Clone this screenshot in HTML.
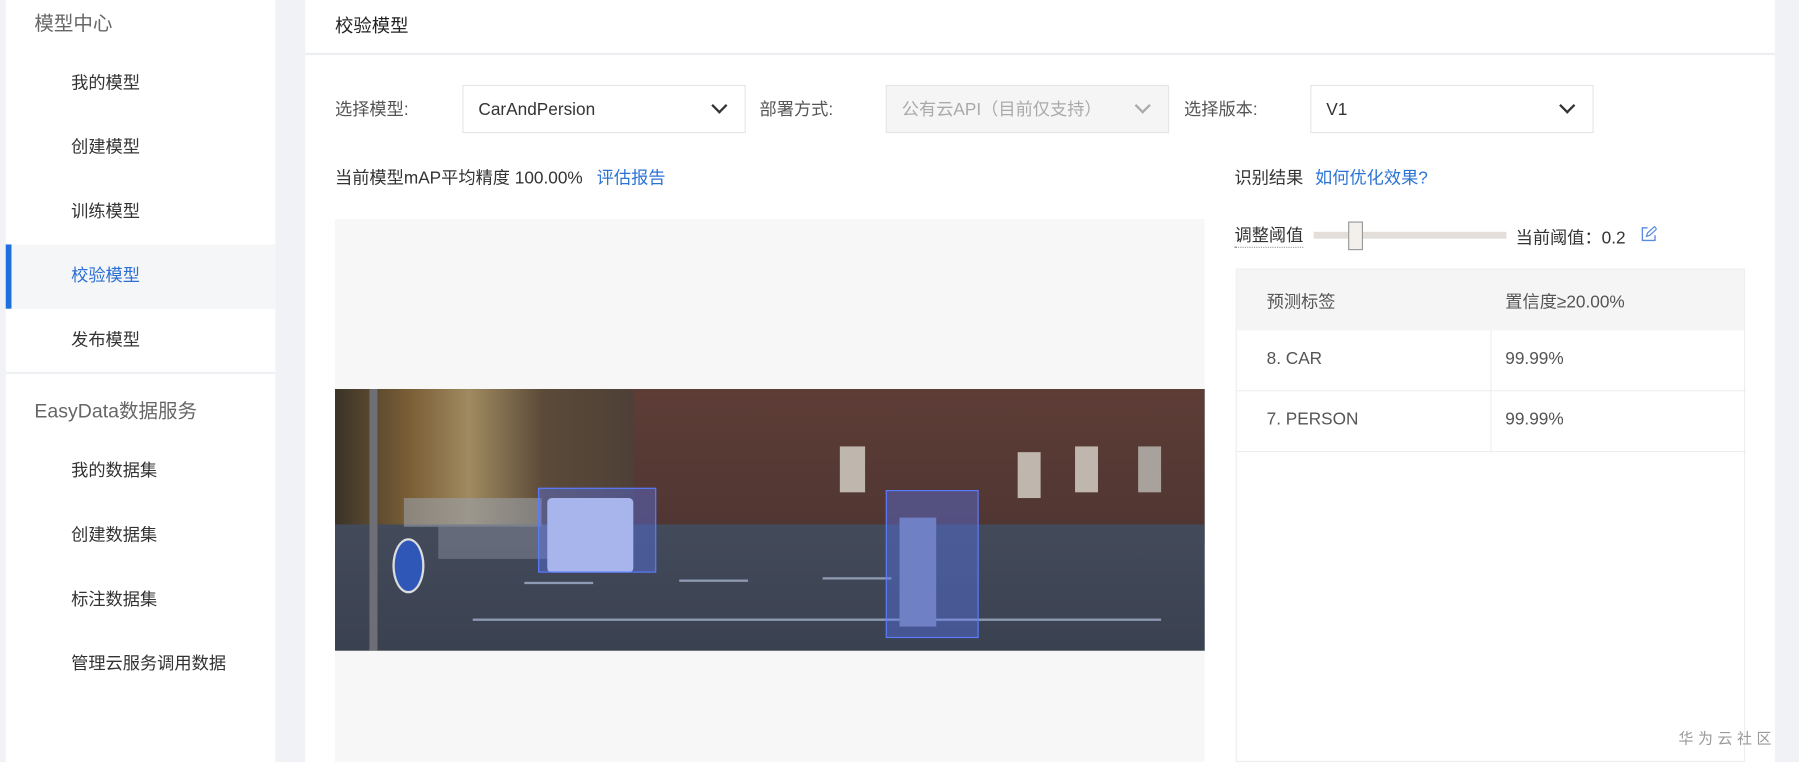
<!DOCTYPE html>
<html><head><meta charset="utf-8"><style>
html,body{margin:0;padding:0;width:1799px;height:762px;overflow:hidden;background:#f0f2f5;}
#w{position:absolute;left:0;top:0;width:1568px;height:664px;transform:scale(1.14732,1.14759);transform-origin:0 0;font-family:"Liberation Sans","Noto Sans CJK SC",sans-serif;color:#333;}
.a{position:absolute;white-space:nowrap;}
.side{position:absolute;left:5px;top:0;width:235px;height:664px;background:#fff;}
.it{position:absolute;left:57px;font-size:15px;color:#333;line-height:20px;}
.main{position:absolute;left:266px;top:0;width:1281px;height:664px;background:#fff;}
.sel{position:absolute;height:42px;border:1px solid #e6e6e6;box-sizing:border-box;background:#fff;font-size:15px;line-height:42px;padding-left:13px;}
.chev{position:absolute;right:17px;top:12px;width:8px;height:8px;border-right:2px solid #333;border-bottom:2px solid #333;transform:rotate(45deg);}
.lbl{font-size:15px;color:#555;}
.blue{color:#2b74d4;}
.box{position:absolute;background:rgba(90,120,255,.38);border:1.5px solid #5b7cff;box-sizing:border-box;}
</style></head><body><div id="w">
<div class="side">
<div class="a" style="left:25px;top:6px;font-size:17px;color:#666;">模型中心</div>
<div class="it" style="top:63px">我的模型</div>
<div class="it" style="top:119px">创建模型</div>
<div class="it" style="top:175px">训练模型</div>
<div style="position:absolute;left:0;top:213px;width:235px;height:56px;background:#f5f6f7;"></div>
<div style="position:absolute;left:0;top:213px;width:5px;height:56px;background:#1f6fde;"></div>
<div class="it" style="top:231px;color:#2b6ed4">校验模型</div>
<div class="it" style="top:287px">发布模型</div>
<div style="position:absolute;left:0;top:324px;width:235px;height:2px;background:#eef0f3;"></div>
<div class="a" style="left:25px;top:344px;font-size:17px;color:#666;">EasyData数据服务</div>
<div class="it" style="top:401px">我的数据集</div>
<div class="it" style="top:457px">创建数据集</div>
<div class="it" style="top:513px">标注数据集</div>
<div class="it" style="top:569px">管理云服务调用数据</div>
</div>
<div class="main">
<div class="a" style="left:26px;top:9px;font-size:16px;color:#222;">校验模型</div>
<div style="position:absolute;left:0;top:46px;width:1281px;height:2px;background:#eceef1;"></div>
</div>
<div class="a lbl" style="left:292px;top:84px;">选择模型:</div>
<div class="sel" style="left:403px;top:74px;width:247px;">CarAndPersion<span class="chev"></span></div>
<div class="a lbl" style="left:662px;top:84px;">部署方式:</div>
<div class="sel" style="left:772px;top:74px;width:247px;background:#f5f5f5;color:#aaa;">公有云API（目前仅支持）<span class="chev" style="border-color:#aaa"></span></div>
<div class="a lbl" style="left:1032px;top:84px;">选择版本:</div>
<div class="sel" style="left:1142px;top:74px;width:247px;">V1<span class="chev"></span></div>
<div class="a" style="left:292px;top:144px;font-size:15px;color:#333;">当前模型mAP平均精度 100.00% <span class="blue" style="margin-left:8px">评估报告</span></div>
<div style="position:absolute;left:292px;top:191px;width:758px;height:473px;background:#f7f7f7;"></div>
<div style="position:absolute;left:292px;top:339px;width:758px;height:228px;overflow:hidden;background:#3c4353;">
 <div style="position:absolute;left:0;top:0;width:260px;height:125px;background:linear-gradient(90deg,#3a3328,#7a5e36 25%,#a08a60 45%,#5b4a38 70%,#4e4038);"></div>
 <div style="position:absolute;left:260px;top:0;width:498px;height:135px;background:linear-gradient(180deg,#5e3d36,#4e3532);"></div>
 <div style="position:absolute;left:0;top:118px;width:758px;height:110px;background:linear-gradient(180deg,#434a5a,#3a4151);"></div>
 <div style="position:absolute;left:60px;top:95px;width:120px;height:25px;background:#9aa0aa;opacity:.6"></div>
 <div style="position:absolute;left:90px;top:118px;width:110px;height:30px;background:#7b8090;opacity:.6;"></div>
 <div style="position:absolute;left:185px;top:95px;width:75px;height:65px;background:#d8dae3;border-radius:4px;"></div>
 <div style="position:absolute;left:30px;top:0;width:7px;height:228px;background:#6d6f75;"></div>
 <div style="position:absolute;left:50px;top:130px;width:24px;height:44px;border-radius:50%;background:#2f57b8;border:2px solid #ddd;"></div>
 <div style="position:absolute;left:120px;top:200px;width:600px;height:2px;background:#8f9ab3;"></div>
 <div style="position:absolute;left:165px;top:168px;width:60px;height:2px;background:#8f9ab3;"></div>
 <div style="position:absolute;left:300px;top:166px;width:60px;height:2px;background:#8f9ab3;"></div>
 <div style="position:absolute;left:425px;top:164px;width:60px;height:2px;background:#8f9ab3;"></div>
 <div style="position:absolute;left:492px;top:112px;width:32px;height:95px;background:#7d85a0;"></div>
 <div style="position:absolute;left:440px;top:50px;width:22px;height:40px;background:#bfb6ae;"></div>
 <div style="position:absolute;left:595px;top:55px;width:20px;height:40px;background:#bfb6ae;"></div>
 <div style="position:absolute;left:645px;top:50px;width:20px;height:40px;background:#bfb6ae;"></div>
 <div style="position:absolute;left:700px;top:50px;width:20px;height:40px;background:#a9a29c;"></div>
</div>
<div class="box" style="left:469px;top:425px;width:103px;height:74px;"></div>
<div class="box" style="left:772px;top:427px;width:81px;height:129px;"></div>
<div class="a" style="left:1076px;top:144px;font-size:15px;">识别结果 <span class="blue" style="margin-left:6px">如何优化效果?</span></div>
<div class="a" style="left:1076px;top:196px;font-size:15px;border-bottom:1px dotted #999;line-height:19px;">调整阈值</div>
<div style="position:absolute;left:1145px;top:202px;width:168px;height:6px;background:#e4deda;"></div>
<div style="position:absolute;left:1175px;top:193px;width:13px;height:25px;background:#f3f0ec;border:1px solid #999;box-sizing:border-box;"></div>
<div class="a" style="left:1321px;top:196px;font-size:15px;">当前阈值：0.2</div>
<svg style="position:absolute;left:1430px;top:197px" width="14" height="14" viewBox="0 0 14 14"><path d="M6 1.5H1.5v11h11V8" fill="none" stroke="#5a8ae0" stroke-width="1.2"/><path d="M5 9l1-3 6-5.5 2 2-6 5.5z" fill="none" stroke="#5a8ae0" stroke-width="1.1"/></svg>
<div style="position:absolute;left:1077px;top:234px;width:444px;height:430px;border:1px solid #eee;box-sizing:border-box;">
 <div style="height:53px;background:#f5f5f5;"></div>
 <div style="position:absolute;left:0;top:105px;width:444px;height:1px;background:#eee"></div>
 <div style="position:absolute;left:0;top:158px;width:444px;height:1px;background:#eee"></div>
 <div style="position:absolute;left:221px;top:53px;width:1px;height:105px;background:#eee"></div>
 <div class="a" style="left:26px;top:17px;font-size:15px;color:#555">预测标签</div>
 <div class="a" style="left:234px;top:17px;font-size:15px;color:#555">置信度≥20.00%</div>
 <div class="a" style="left:26px;top:69px;font-size:15px;color:#555">8. CAR</div>
 <div class="a" style="left:234px;top:69px;font-size:15px;color:#555">99.99%</div>
 <div class="a" style="left:26px;top:122px;font-size:15px;color:#555">7. PERSON</div>
 <div class="a" style="left:234px;top:122px;font-size:15px;color:#555">99.99%</div>
</div>
<div class="a" style="left:1463px;top:633px;font-size:13px;color:#999;letter-spacing:4px;">华为云社区</div>
</div></body></html>
